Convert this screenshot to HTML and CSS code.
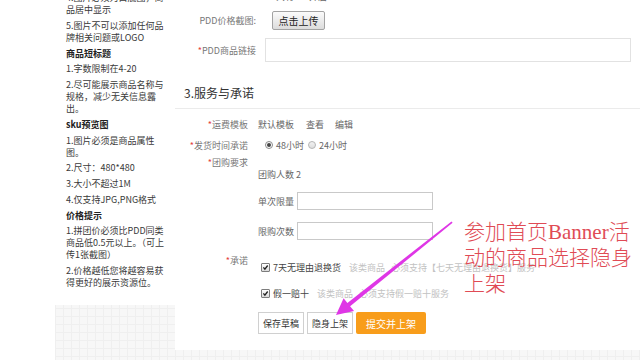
FILE: index.html
```html
<!DOCTYPE html>
<html lang="zh-CN">
<head>
  <meta charset="UTF-8" />
  <meta name="viewport" content="width=device-width, initial-scale=1.0"/>
  <title>发布商品</title>
  <link rel="stylesheet" href="styles.css">
</head>
<body>
  <div class="page">
    <!-- 左侧提示 -->
    <div class="tips">
      <p>4.图片必须为白底图，商<br>品居中显示</p>
      <p>5.图片不可以添加任何品<br>牌相关问题或LOGO</p>
      <h4>商品短标题</h4>
      <p>1.字数限制在4-20</p>
      <p>2.尽可能展示商品名称与<br>规格，减少无关信息露<br>出。</p>
      <h4>sku预览图</h4>
      <p>1.图片必须是商品属性<br>图。</p>
      <p>2.尺寸：480*480</p>
      <p>3.大小不超过1M</p>
      <p>4.仅支持JPG,PNG格式</p>
      <h4>价格提示</h4>
      <p>1.拼团价必须比PDD同类<br>商品低0.5元以上。（可上<br>传1张截图）</p>
      <p>2.价格越低您将越容易获<br>得更好的展示资源位。</p>
    </div>

    <div class="main">
      <div class="form-top">
        <div class="row row-cut">
          <span class="label"></span>
          <span class="radio on"></span><span class="opt">共有</span>
          <span class="radio"></span><span class="opt">开启</span>
        </div>
        <div class="row row-upload">
          <span class="label">PDD价格截图:</span>
          <button class="upload-btn">点击上传</button>
        </div>
        <div class="row row-link">
          <span class="label"><i>*</i>PDD商品链接</span>
          <input type="text" class="link-input" />
        </div>
      </div>

      <h3 class="section-title">3.服务与承诺</h3>

      <div class="section">
        <div class="row row-s">
          <span class="label"><i>*</i>运费模板</span>
          <span class="val">默认模板</span>
          <a class="link">查看</a>
          <a class="link">编辑</a>
        </div>
        <div class="row row-s row-time">
          <span class="label"><i>*</i>发货时间承诺</span>
          <span class="radio on first"></span><span class="opt">48小时</span>
          <span class="radio"></span><span class="opt">24小时</span>
        </div>
        <div class="row row-group">
          <span class="label"><i>*</i>团购要求</span>
          <div class="group-vals">
            <div class="val-line">团购人数 2</div>
            <div class="limit-line">单次限量<input type="text" class="small-input" /></div>
            <div class="limit-line second">限购次数<input type="text" class="small-input" /></div>
          </div>
        </div>
        <div class="row row-promise">
          <span class="label"><i>*</i>承诺</span>
          <div class="promise-vals">
            <div class="check-line">
              <span class="check"><svg viewBox="0 0 9 9"><path d="M1.8 4.4 L3.7 6.6 L7.3 1.9" /></svg></span>
              <span class="check-name">7天无理由退换货</span>
              <span class="check-note">该类商品</span><span class="check-note gap">必须支持【七天无理由退换货】服务</span>
            </div>
            <div class="check-line second">
              <span class="check"><svg viewBox="0 0 9 9"><path d="M1.8 4.4 L3.7 6.6 L7.3 1.9" /></svg></span>
              <span class="check-name">假一赔十</span>
              <span class="check-note">该类商品</span><span class="check-note gap">必须支持假一赔十服务</span>
            </div>
          </div>
        </div>
        <div class="actions">
          <button class="btn">保存草稿</button>
          <button class="btn">隐身上架</button>
          <button class="btn btn-submit">提交并上架</button>
        </div>
      </div>
    </div>
  </div>

  <!-- 标注 -->
  <div class="overlay">
    <svg class="arrow" width="640" height="360" viewBox="0 0 640 360">
      <polygon points="451.5,221.4 452.6,222.8 350.1,306.3 354,311 336,315 343.6,298.2 347.4,302.9" />
    </svg>
    <div class="note">参加首页Banner活<br>动的商品选择隐身<br>上架</div>
  </div>
</body>
</html>
```

FILE: styles.css
```css
* {
  margin: 0;
  padding: 0;
  box-sizing: border-box;
}

body {
  width: 640px;
  height: 360px;
  overflow: hidden;
  background: #fff;
  font-family: "Noto Sans CJK SC", sans-serif;
}

.page {
  display: flex;
  align-items: flex-start;
  margin: -20px 0 0 55px;
  height: 380px;
  background-color: #f7f7f7;
  background-image: linear-gradient(#efefef 1px, transparent 1px),
    linear-gradient(90deg, #efefef 1px, transparent 1px);
  background-size: 8px 8px;
}

/* 左侧提示 */
.tips {
  width: 120px;
  height: 325px;
  background: #fff;
  padding: 12px 0 0 11px;
  font-size: 9px;
  line-height: 12px;
  color: #3a3a3a;
  white-space: nowrap;
}

.tips p,
.tips h4 {
  margin-bottom: 3.75px;
}

.tips h4 {
  font-size: 9px;
  font-weight: bold;
  color: #222;
}

/* 主表单 */
.main {
  flex: 1;
  height: 370px;
  background: #fff;
  padding-top: 8px;
  font-size: 9px;
  color: #666;
}

.row {
  display: flex;
  align-items: center;
  white-space: nowrap;
}

.label {
  text-align: right;
  color: #777;
}

.label i {
  font-style: normal;
  color: #e53c3c;
}

.form-top .label {
  width: 81px;
  margin-right: 9px;
}

.row-cut {
  height: 16px;
}

.row-cut .radio:first-of-type {
  margin-left: 5px;
}

.row-upload {
  height: 20px;
  margin-top: 6px;
}

.upload-btn {
  height: 19px;
  width: 53px;
  margin-left: 7px;
  background: linear-gradient(#fbfbfb, #dcdcdc);
  border: 1px solid #a3a3a3;
  border-radius: 2px;
  font-family: inherit;
  font-size: 10px;
  color: #222;
}

.row-link {
  height: 24px;
  margin-top: 8px;
}

.link-input {
  width: 366px;
  height: 24px;
  border: 1px solid #e2e2e2;
  outline: none;
}

.section-title {
  margin-top: 23px;
  margin-bottom: 7px;
  padding-left: 9px;
  font-size: 12px;
  line-height: 16px;
  font-weight: normal;
  color: #333;
}

.section {
  border-top: 1px solid #ebebeb;
  padding-top: 6px;
}

.section .label {
  width: 73px;
  margin-right: 10px;
}

.row-s {
  height: 18px;
}

.row-time {
  margin-top: 3px;
}

.val {
  color: #666;
  margin-right: 12px;
}

.link {
  color: #666;
  margin-right: 11px;
}

.radio {
  display: inline-block;
  position: relative;
  width: 8px;
  height: 8px;
  border-radius: 50%;
  border: 1px solid #b5b5b5;
  background: linear-gradient(#f2f2f2, #dedede);
  margin-right: 3px;
}

.radio.on {
  border-color: #8a8a8a;
  background: #fff;
}

.radio.on::after {
  content: "";
  position: absolute;
  left: 1px;
  top: 1px;
  width: 4px;
  height: 4px;
  border-radius: 50%;
  background: #444;
}

.radio.first {
  margin-left: 7px;
}

.opt {
  margin-right: 4px;
  color: #666;
}

.row-group {
  align-items: flex-start;
  margin-top: 2px;
}

.row-group .label,
.row-promise .label {
  line-height: 14px;
}

.group-vals {
  padding-top: 12px;
}

.val-line {
  line-height: 14px;
}

.limit-line {
  display: flex;
  align-items: center;
  height: 18px;
  margin-top: 10px;
}

.limit-line.second {
  margin-top: 12px;
}

.small-input {
  width: 136px;
  height: 18px;
  margin-left: 3px;
  border: 1px solid #c9c9c9;
  outline: none;
}

.row-promise {
  align-items: flex-start;
  margin-top: 14px;
}

.promise-vals {
  padding-top: 6px;
}

.check-line {
  display: flex;
  align-items: center;
  height: 14px;
}

.check-line.second {
  margin-top: 12px;
}

.check {
  display: inline-block;
  width: 9px;
  height: 9px;
  margin: 0 3px 0 3px;
  border: 1px solid #7d7d7d;
  border-radius: 1px;
  background: linear-gradient(#fff, #dadada);
}

.check svg {
  display: block;
  width: 7px;
  height: 7px;
}

.check path {
  fill: none;
  stroke: #222;
  stroke-width: 1.7;
}

.check-name {
  color: #444;
  margin-right: 8px;
}

.check-note {
  color: #c2c2c2;
}

.check-note.gap {
  margin-left: 6px;
}

.actions {
  display: flex;
  gap: 3px;
  margin-top: 12px;
  padding-left: 83px;
}

.btn {
  width: 46px;
  height: 22px;
  border: 1px solid #d0d0d0;
  background: #fff;
  font-family: inherit;
  font-size: 9px;
  color: #333;
}

.btn-submit {
  width: 70px;
  border: none;
  border-radius: 2px;
  background: #f89d1b;
  color: #fff;
  font-size: 10px;
}

/* 标注 */
.overlay {
  position: absolute;
  left: 0;
  top: 0;
  width: 640px;
  height: 360px;
  pointer-events: none;
}

.arrow polygon {
  fill: #df36e6;
}

.note {
  position: absolute;
  left: 464px;
  top: 219px;
  font-family: "Liberation Serif", "Noto Sans CJK SC", serif;
  font-size: 21px;
  font-weight: 300;
  line-height: 26px;
  color: #e04b55;
  white-space: nowrap;
}
```
